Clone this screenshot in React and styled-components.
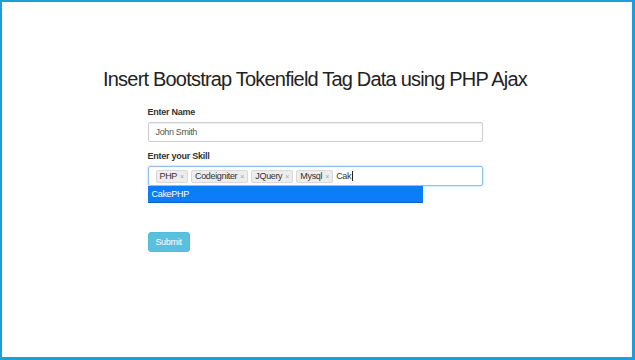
import React from "react";
import styled, { createGlobalStyle } from "styled-components";

const Global = createGlobalStyle`
  html, body { margin: 0; padding: 0; background: #fff; }
  * { box-sizing: border-box; }
`;

const Frame = styled.div`
  width: 635px;
  height: 360px;
  border: 2px solid #1a9fdb;
  border-right-width: 3px;
  border-bottom-width: 3px;
  padding: 65px 4px 0 0;
  font-family: "Liberation Sans", Arial, sans-serif;
  background: #fff;
`;

const Title = styled.h1`
  margin: 0;
  font-size: 20px;
  line-height: 24px;
  font-weight: normal;
  letter-spacing: -0.8px;
  color: #222;
  text-align: center;
`;

const Form = styled.form`
  width: 335px;
  margin: 16px auto 0;
  display: flex;
  flex-direction: column;
`;

const Label = styled.label`
  font-size: 9px;
  line-height: 11px;
  font-weight: bold;
  letter-spacing: -0.25px;
  color: #333;
  margin-bottom: 4px;
`;

const TextBox = styled.div`
  height: 20px;
  border: 1px solid #ccc;
  border-radius: 2px;
  box-shadow: inset 0 1px 1px rgba(0, 0, 0, 0.06);
  padding-left: 7px;
  display: flex;
  align-items: center;
  font-size: 9px;
  letter-spacing: -0.35px;
  color: #555;
  margin-bottom: 9px;
`;

const Field = styled.div`
  position: relative;
`;

const TokenBox = styled.div`
  height: 20px;
  border: 1px solid #8fc0ea;
  border-radius: 2px;
  box-shadow: 0 0 3px rgba(102, 175, 233, 0.55);
  padding-left: 7px;
  display: flex;
  align-items: center;
  gap: 3px;
  font-size: 9px;
  color: #333;
`;

const Token = styled.span`
  height: 13px;
  display: inline-flex;
  align-items: center;
  padding: 0 3px;
  background: #ededed;
  border: 1px solid #d9d9d9;
  border-radius: 2px;
  font-size: 9px;
  letter-spacing: -0.35px;
  color: #333;
`;

const Close = styled.span`
  margin-left: 3px;
  font-size: 7px;
  letter-spacing: 0;
  color: #a5a5a5;
`;

const Typed = styled.span`
  display: inline-flex;
  align-items: center;
  font-size: 9px;
  letter-spacing: -0.35px;
  color: #333;
`;

const Caret = styled.span`
  display: inline-block;
  width: 1px;
  height: 10px;
  background: #222;
  margin-left: 1px;
`;

const Menu = styled.div`
  position: absolute;
  top: 20px;
  left: 0;
  width: 275px;
  height: 17px;
  background: #0b7df6;
  border-bottom: 1px solid #0764c6;
  color: #fff;
  font-size: 9px;
  letter-spacing: -0.3px;
  padding-left: 4px;
  display: flex;
  align-items: center;
`;

const Submit = styled.button`
  align-self: flex-start;
  margin-top: 46px;
  width: 42px;
  height: 20px;
  padding: 0;
  background: #5bc0de;
  border: 1px solid #52bcdc;
  border-radius: 3px;
  color: #fff;
  font-family: "Liberation Sans", Arial, sans-serif;
  font-size: 9px;
  letter-spacing: -0.3px;
`;

const skills = ["PHP", "Codeigniter", "JQuery", "Mysql"];

export default function App() {
  return (
    <>
      <Global />
      <Frame>
        <Title>Insert Bootstrap Tokenfield Tag Data using PHP Ajax</Title>
        <Form onSubmit={(e) => e.preventDefault()}>
          <Label>Enter Name</Label>
          <TextBox>John Smith</TextBox>
          <Label>Enter your Skill</Label>
          <Field>
            <TokenBox>
              {skills.map((s) => (
                <Token key={s}>
                  {s}
                  <Close>×</Close>
                </Token>
              ))}
              <Typed>
                Cak
                <Caret />
              </Typed>
            </TokenBox>
            <Menu>CakePHP</Menu>
          </Field>
          <Submit type="submit">Submit</Submit>
        </Form>
      </Frame>
    </>
  );
}
